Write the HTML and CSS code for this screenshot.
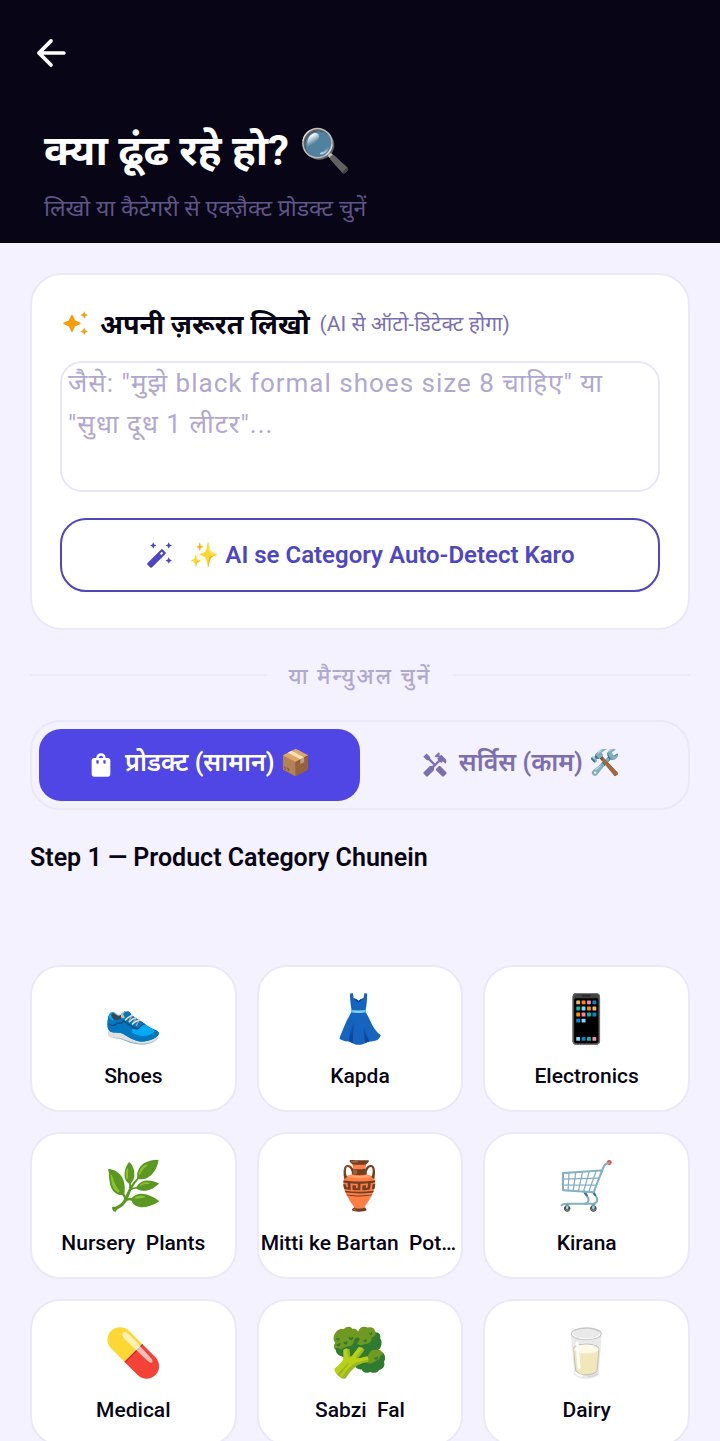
FILE: index.html
```html
<!DOCTYPE html>
<html lang="hi">
<head>
  <meta charset="UTF-8">
  <meta name="viewport" content="width=device-width, initial-scale=1.0">
  <title>क्या ढूंढ रहे हो?</title>
  <link rel="stylesheet" href="styles.css">
</head>
<body>
  <header class="header">
    <button class="back-button" aria-label="Back">
      <svg class="icon-back" viewBox="0 0 24 24"><path d="M19 11H7.83l4.88-4.88c.39-.39.39-1.03 0-1.42-.39-.39-1.02-.39-1.41 0l-6.59 6.59c-.39.39-.39 1.02 0 1.41l6.59 6.59c.39.39 1.02.39 1.41 0 .39-.39.39-1.02 0-1.41L7.83 13H19c.55 0 1-.45 1-1s-.45-1-1-1z"/></svg>
    </button>
    <h1 class="title">क्या ढूंढ रहे हो? <span class="emoji">🔍</span></h1>
    <p class="subtitle">लिखो या कैटेगरी से एक्ज़ैक्ट प्रोडक्ट चुनें</p>
  </header>

  <main class="content">
    <!-- AI search card -->
    <section class="card">
      <label class="card-label" for="need">
        <svg class="icon icon-spark" viewBox="0 0 24 24"><path d="M19 8.600l1-2.400 2.400-1-2.400-1-1-2.400-1 2.400-2.400 1 2.400 1zM11.200 9.600L9.300 5.400c-.3-.7-1.200-.7-1.500 0L5.900 9.600l-4.200 1.900c-.7.3-.7 1.200 0 1.500l4.200 1.900 1.900 4.200c.3.7 1.200.7 1.500 0l1.900-4.200 4.200-1.900c.7-.3.7-1.200 0-1.500zM19 15.800l-1 2.400-2.400 1 2.400 1 1 2.400 1-2.400 2.400-1-2.400-1z"/></svg>
        <span class="card-title">अपनी ज़रूरत लिखो</span>
        <span class="card-hint">(AI से ऑटो-डिटेक्ट होगा)</span>
      </label>
      <textarea class="need-input" id="need" placeholder='जैसे: "मुझे black formal shoes size 8 चाहिए" या "सुधा दूध 1 लीटर"...'></textarea>
      <button class="detect-button">
        <svg class="icon" viewBox="0 0 24 24"><path d="M6.200 6.600l.9-1.900L9 3.800l-1.900-.9L6.200 1l-.9 1.900-1.900.9 1.900.9zM19.500 14l-.9 1.900-1.900.9 1.900.9.9 1.900.9-1.900 1.900-.9-1.900-.9zM19.500 1l-.9 1.900-1.900.9 1.900.9.9 1.900.9-1.900 1.900-.9-1.900-.9zM14.370 7.290c-.39-.39-1.020-.39-1.410 0L1.290 18.960c-.39.39-.39 1.020 0 1.410l2.340 2.340c.39.39 1.020.39 1.410 0L16.700 11.050c.39-.39.39-1.020 0-1.410zM13.100 12.100l-1.250-1.250 1.700-1.700 1.250 1.250z"/></svg>
        <span><span class="emoji">✨</span> AI se Category Auto-Detect Karo</span>
      </button>
    </section>

    <div class="divider"><span class="divider-text">या मैन्युअल चुनें</span></div>

    <!-- product / service switch -->
    <div class="tabs">
      <button class="tab active">
        <svg class="icon" viewBox="0 0 24 24"><path d="M18 6h-2c0-2.210-1.790-4-4-4S8 3.790 8 6H6c-1.100 0-2 .9-2 2v12c0 1.100.9 2 2 2h12c1.100 0 2-.9 2-2V8c0-1.100-.9-2-2-2zm-8 4c0 .55-.45 1-1 1s-1-.45-1-1V8h2v2zm2-6c1.100 0 2 .9 2 2h-4c0-1.100.9-2 2-2zm4 6c0 .55-.45 1-1 1s-1-.45-1-1V8h2v2z"/></svg>
        <span class="tab-label">प्रोडक्ट (सामान) <span class="emoji">📦</span></span>
      </button>
      <button class="tab">
        <svg class="icon" viewBox="0 0 24 24"><path d="M21.670 18.170l-5.300-5.300h-.99l-2.540 2.540v.99l5.300 5.300c.39.39 1.020.39 1.410 0l2.120-2.120c.39-.38.39-1.020 0-1.410z"/><path d="M17.340 10.190l1.410-1.410 2.120 2.120c1.170-1.170 1.170-3.070 0-4.240l-3.540-3.540-1.410 1.410V1.710L15.220 1l-3.540 3.540.71.71h2.830l-1.410 1.410 1.060 1.060-2.890 2.890-4.130-4.130V5.060L4.830 2.040 2 4.870 5.030 7.900h1.410l4.130 4.130-.85.85H7.600l-5.300 5.300c-.39.39-.39 1.020 0 1.410l2.120 2.120c.39.39 1.020.39 1.410 0l5.300-5.300v-2.120l5.150-5.150 1.060 1.050z"/></svg>
        <span class="tab-label">सर्विस (काम) <span class="emoji">🛠️</span></span>
      </button>
    </div>

    <h2 class="step-title">Step 1 — Product Category Chunein</h2>

    <div class="grid">
      <button class="category"><span class="category-icon">👟</span><span class="category-name">Shoes</span></button>
      <button class="category"><span class="category-icon">👗</span><span class="category-name">Kapda</span></button>
      <button class="category"><span class="category-icon">📱</span><span class="category-name">Electronics</span></button>
      <button class="category"><span class="category-icon">🌿</span><span class="category-name">Nursery  Plants</span></button>
      <button class="category"><span class="category-icon">🏺</span><span class="category-name">Mitti ke Bartan  Pottery</span></button>
      <button class="category"><span class="category-icon">🛒</span><span class="category-name">Kirana</span></button>
      <button class="category"><span class="category-icon">💊</span><span class="category-name">Medical</span></button>
      <button class="category"><span class="category-icon">🥦</span><span class="category-name">Sabzi  Fal</span></button>
      <button class="category"><span class="category-icon">🥛</span><span class="category-name">Dairy</span></button>
    </div>
  </main>
</body>
</html>
```
FILE: styles.css
```css
* {
  box-sizing: border-box;
}
body {
  font-family: Roboto, "Noto Sans", "Noto Sans Devanagari", "Noto Color Emoji", sans-serif;
  background-color: #f4f2ff;
  color: #080616;
  display: flex;
  flex-direction: column;
  height: 100vh;
  margin: 0;
  overflow: hidden;
}
button {
  font-family: inherit;
  cursor: pointer;
}
svg {
  display: block;
  fill: currentColor;
}
.header {
  background-color: #080616;
  color: white;
  padding: 31px 44px 18px;
  flex: none;
}
.back-button {
  background: none;
  border: none;
  color: white;
  padding: 0;
  margin-left: -15px;
}
.icon-back {
  width: 44px;
  height: 44px;
}
.title {
  margin: 42px 0 0;
  font-size: 42px;
  line-height: 60px;
  font-weight: 700;
}
.subtitle {
  margin: 12px 0 0;
  font-size: 23px;
  line-height: 32px;
  color: #5f5588;
}
.content {
  flex: 1;
  min-height: 0;
  overflow: hidden;
  padding: 30px;
}
.card {
  background-color: white;
  border: 2px solid #ebe8f8;
  border-radius: 32px;
  padding: 28px 28px 36px;
}
.card-label {
  display: flex;
  align-items: center;
  gap: 10px;
  height: 40px;
  padding-left: 2px;
}
.icon {
  width: 28px;
  height: 28px;
  flex: none;
}
.icon-spark {
  color: #f59e0b;
}
.card-title {
  font-size: 27px;
  font-weight: 700;
}
.card-hint {
  font-size: 21px;
  color: #7c6fb0;
}
.need-input {
  display: block;
  width: 100%;
  height: 131px;
  margin: 18px 0 26px;
  padding: 0 6px;
  border: 2px solid #e8e5f5;
  border-radius: 22px;
  background-color: white;
  color: #080616;
  font-family: inherit;
  font-size: 26px;
  line-height: 41px;
  letter-spacing: 1px;
  resize: none;
}
.need-input::placeholder {
  color: #b0a8d0;
}
.detect-button {
  display: flex;
  align-items: center;
  justify-content: center;
  gap: 16px;
  width: 100%;
  height: 74px;
  border: 2px solid #5145b8;
  border-radius: 26px;
  background-color: white;
  color: #4f46c4;
  font-size: 24px;
  font-weight: 600;
}
.divider {
  display: flex;
  align-items: center;
  gap: 22px;
  height: 90px;
}
.divider::before,
.divider::after {
  content: "";
  flex: 1;
  height: 2px;
  background-color: #edeaf9;
}
.divider-text {
  font-size: 22px;
  font-weight: 500;
  letter-spacing: 2px;
  color: #b0a8d0;
}
.tabs {
  display: flex;
  height: 90px;
  padding: 7px;
  border: 2px solid #ebe8f8;
  border-radius: 30px;
}
.tab {
  flex: 1;
  display: flex;
  align-items: center;
  justify-content: center;
  gap: 10px;
  padding: 0;
  border: none;
  border-radius: 22px;
  background: none;
  color: #7c6fb0;
  font-size: 25px;
  font-weight: 600;
}
.tab-label {
  padding-bottom: 8px;
}
.tab.active {
  background-color: #4f46e5;
  color: white;
}
.step-title {
  margin: 30px 0 90px;
  font-size: 25px;
  line-height: 35px;
  font-weight: 600;
}
.grid {
  display: grid;
  grid-template-columns: repeat(3, 1fr);
  gap: 20px;
}
.category {
  display: flex;
  flex-direction: column;
  align-items: center;
  justify-content: center;
  gap: 14px;
  min-width: 0;
  height: 147px;
  padding: 4px 2px 0;
  border: 2px solid #ebe8f8;
  border-radius: 30px;
  background-color: white;
  color: #080616;
}
.category-icon {
  font-size: 47px;
  line-height: 56px;
}
.category-name {
  max-width: 100%;
  overflow: hidden;
  white-space: pre;
  text-overflow: ellipsis;
  font-size: 21px;
  line-height: 30px;
  font-weight: 500;
}
```
